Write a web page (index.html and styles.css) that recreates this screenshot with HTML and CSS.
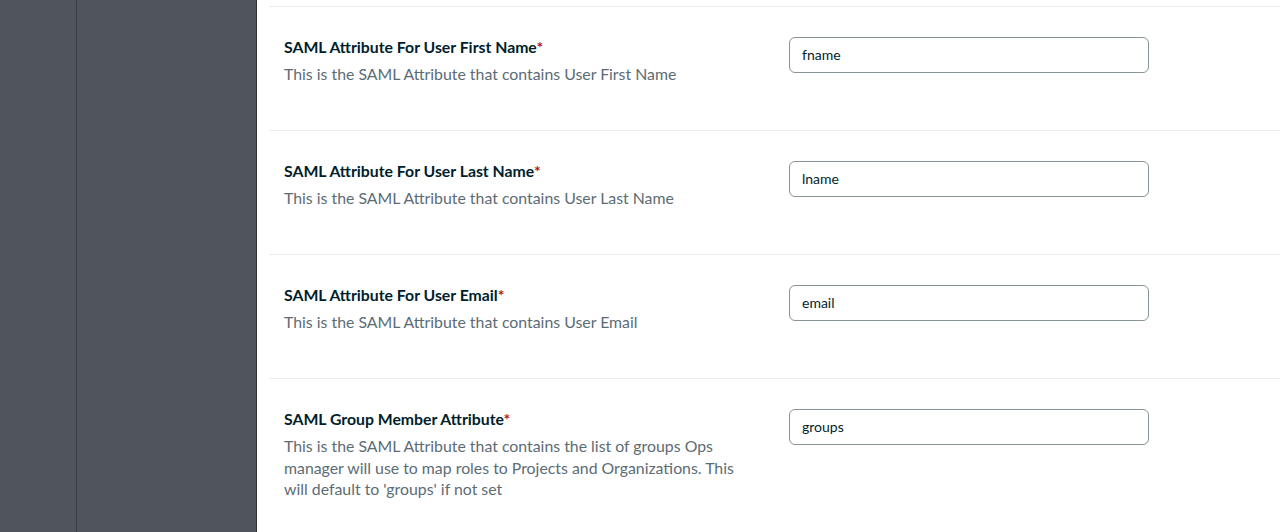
FILE: index.html
```html
<!DOCTYPE html>
<html>
<head>
<meta charset="utf-8">
<link rel="stylesheet" href="styles.css">
</head>
<body>
<div class="app">
  <aside class="rail"></aside>
  <aside class="nav"></aside>
  <main class="main">
    <div class="row">
      <div class="info">
        <div class="label">SAML Attribute For User First Name<span class="req">*</span></div>
        <div class="desc">This is the SAML Attribute that contains User First Name</div>
      </div>
      <div class="field"><input class="input" type="text" value="fname"></div>
    </div>
    <div class="row">
      <div class="info">
        <div class="label">SAML Attribute For User Last Name<span class="req">*</span></div>
        <div class="desc">This is the SAML Attribute that contains User Last Name</div>
      </div>
      <div class="field"><input class="input" type="text" value="lname"></div>
    </div>
    <div class="row">
      <div class="info">
        <div class="label">SAML Attribute For User Email<span class="req">*</span></div>
        <div class="desc">This is the SAML Attribute that contains User Email</div>
      </div>
      <div class="field"><input class="input" type="text" value="email"></div>
    </div>
    <div class="row">
      <div class="info">
        <div class="label">SAML Group Member Attribute<span class="req">*</span></div>
        <div class="desc">This is the SAML Attribute that contains the list of groups Ops manager will use to map roles to Projects and Organizations. This will default to 'groups' if not set</div>
      </div>
      <div class="field"><input class="input" type="text" value="groups"></div>
    </div>
  </main>
</div>
</body>
</html>
```

FILE: styles.css
```css
* { box-sizing: border-box; }
html, body { margin: 0; padding: 0; height: 100%; overflow: hidden; background: #fff; }
body { font-family: "Lato", "Liberation Sans", sans-serif; }
.app { display: flex; height: 532px; }
.rail { width: 77px; flex: none; background: #50545c; border-right: 1px solid #3a3d43; }
.nav { width: 180px; flex: none; background: #50545c; border-right: 1px solid #2e3136; }
.main { flex: 1; padding-left: 12px; padding-top: 6px; }
.row { display: flex; border-top: 1px solid #e8edeb; height: 124px; padding: 30px 0 0 15px; }
.info { width: 472px; flex: none; }
.label { font-size: 15.8px; font-weight: 700; color: #001e2b; line-height: 20px; }
.req { color: #b01c22; }
.desc { margin-top: 6px; font-size: 15.85px; line-height: 21.5px; color: #5c6c75; }
.field { margin-left: 33px; }
.input { width: 360px; height: 36px; border: 1px solid #889397; border-radius: 6px; padding: 0 12px 2px; font-family: inherit; font-size: 14px; color: #001e2b; background: #fff; outline: none; }
```
